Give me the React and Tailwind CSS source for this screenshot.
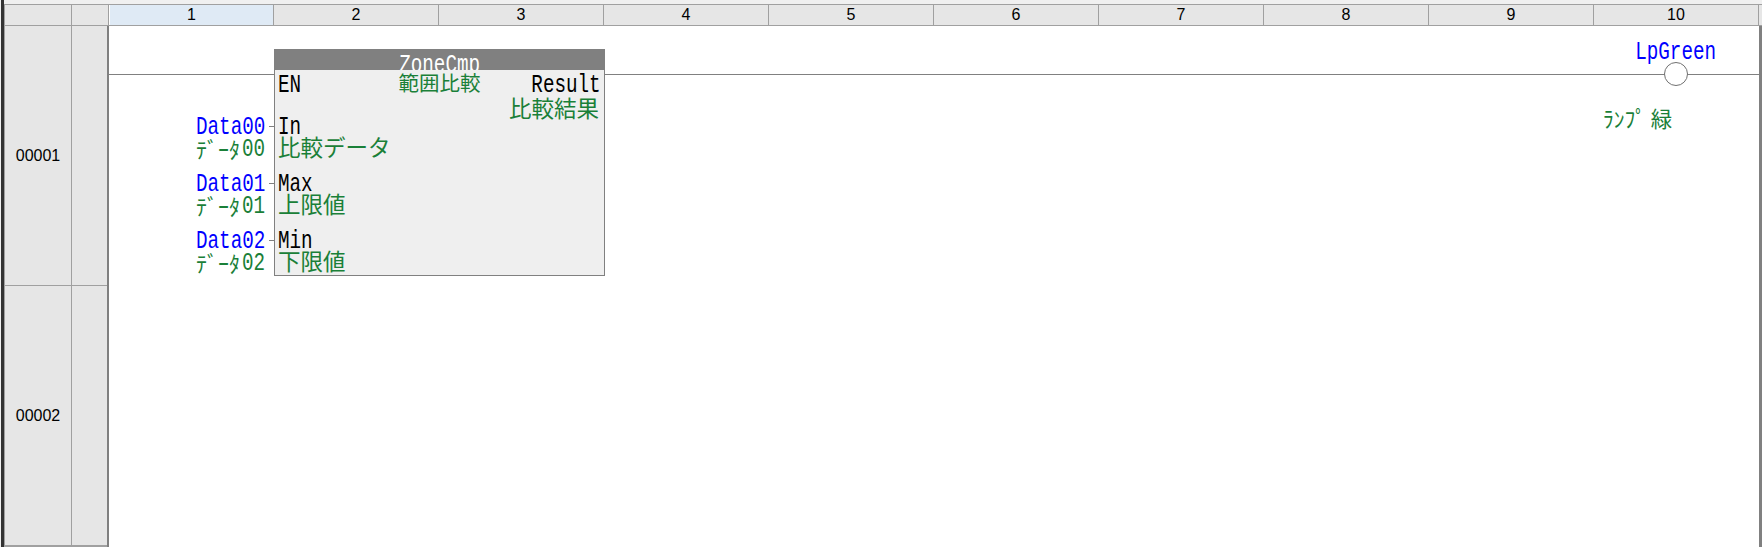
const cols = [1, 2, 3, 4, 5, 6, 7, 8, 9, 10];
const jp = "block whitespace-nowrap font-['Noto_Sans_CJK_JP','Liberation_Sans',sans-serif] leading-[22px] text-[#1a8038]";
const mono = "block whitespace-nowrap scale-x-[0.74] font-['Liberation_Mono',monospace] text-[26px] leading-[26px]";

function Mono({ color = "text-black", origin = "origin-left", children }) {
  return <span className={`${mono} ${origin} ${color}`}>{children}</span>;
}
function Jp({ className = "", size = "text-[22.5px]", children }) {
  return <span className={`${jp} ${size} ${className}`}>{children}</span>;
}

const pins = [
  { data: "Data00", tail: "00", name: "In", note: "比較データ" },
  { data: "Data01", tail: "01", name: "Max", note: "上限値" },
  { data: "Data02", tail: "02", name: "Min", note: "下限値" },
];

function FunctionBlock() {
  return (
    <div className="absolute left-[87px] top-[23px] flex items-start">
      <div className="w-[78px] shrink-0 pt-[65px] flex flex-col">
        {pins.map((p) => (
          <div key={p.data} className="relative h-[57px]">
            <Mono color="text-[#0000ff]">{p.data}</Mono>
            <div className="flex items-start -mt-[3px]">
              <Jp className="w-[46px] shrink-0" size="text-[22px]">ﾃﾞｰﾀ</Jp>
              <div className="-mt-px">
                <Mono color="text-[#1a8038]">{p.tail}</Mono>
              </div>
            </div>
            <div className="absolute right-0 top-[12px] w-[5px] h-px bg-[#808080]" />
          </div>
        ))}
      </div>
      <div className="relative w-[331px] h-[227px] shrink-0 flex flex-col bg-[#efefef] border-x border-b border-[#808080]">
        <div className="h-[21px] shrink-0 -mx-px bg-[#808080] overflow-hidden flex justify-center pt-[3px]">
          <Mono color="text-white" origin="origin-center">ZoneCmp</Mono>
        </div>
        <div className="flex flex-col pt-[2px] pl-[3px] pr-[3px]">
          <div className="flex justify-between h-[42px]">
            <Mono>EN</Mono>
            <div className="flex flex-col items-end">
              <Mono origin="origin-right">Result</Mono>
              <Jp className="-mt-[2px] mr-[2px]">比較結果</Jp>
            </div>
          </div>
          {pins.map((p) => (
            <div key={p.name} className="h-[57px]">
              <Mono>{p.name}</Mono>
              <Jp className="-mt-[5px]">{p.note}</Jp>
            </div>
          ))}
        </div>
        <div className="absolute left-0 right-0 top-[22px] flex justify-center">
          <Jp size="text-[20.5px]">範囲比較</Jp>
        </div>
      </div>
    </div>
  );
}

function Coil() {
  return (
    <div className="absolute left-[1494px] top-[13px] w-[146px] flex flex-col items-center">
      <Mono color="text-[#0000ff]" origin="origin-center">LpGreen</Mono>
      <div className="w-[24px] h-[24px] -mt-[3px] rounded-full bg-white border border-[#707070]" />
      <Jp className="self-start mt-[21px]" size="text-[21.5px]">ﾗﾝﾌﾟ 緑</Jp>
    </div>
  );
}

export default function App() {
  return (
    <div className="flex w-[1762px] h-[547px] overflow-hidden bg-white font-['Liberation_Sans',sans-serif]">
      <div className="w-[4px] shrink-0 bg-[#333333] border-l border-[#f0f0f0]" />
      <div className="flex flex-col w-[1758px]">
        <div className="h-[4px] shrink-0 bg-[#f0f0f0]" />
        <div className="flex h-[22px] shrink-0 bg-[#e6e6e6] border-y border-[#a0a0a0] border-l text-[16px] leading-[20px] text-black">
          <div className="w-[67px] shrink-0 border-r border-[#a0a0a0]" />
          <div className="w-[37px] shrink-0 border-r border-[#a0a0a0]" />
          {cols.map((c) => (
            <div
              key={c}
              className={
                c === 1
                  ? "w-[165px] shrink-0 text-center border-r border-[#a0a0a0] bg-[#dfeaf5] border-l border-l-white"
                  : "w-[165px] shrink-0 text-center border-r border-[#a0a0a0]"
              }
            >
              {c}
            </div>
          ))}
        </div>
        <div className="flex flex-1 min-h-0">
          <div className="w-[105px] shrink-0 flex flex-col bg-[#e6e6e6] border-l border-[#a0a0a0] text-[16px] text-black">
            {["00001", "00002"].map((n) => (
              <div key={n} className="flex h-[260px] shrink-0 border-b border-[#a0a0a0]">
                <div className="w-[67px] shrink-0 flex items-center justify-center border-r border-[#a0a0a0]">{n}</div>
                <div className="flex-1" />
              </div>
            ))}
            <div className="flex-1 border-t border-[#a0a0a0]" />
          </div>
          <div className="relative flex-1 bg-white border-l-2 border-[#808080] -ml-[2px] border-r-[3px] border-r-[#808080] w-[1655px]">
            <div className="absolute left-0 right-0 top-[48px] h-px bg-[#808080]" />
            <FunctionBlock />
            <Coil />
          </div>
        </div>
      </div>
    </div>
  );
}
